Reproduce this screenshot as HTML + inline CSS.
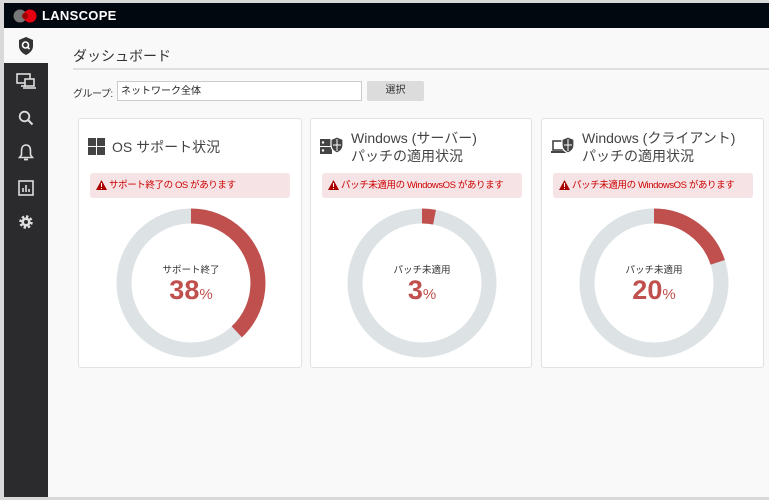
<!DOCTYPE html>
<html><head><meta charset="utf-8"><style>
*{margin:0;padding:0;box-sizing:border-box}
body{width:769px;height:500px;overflow:hidden;background:#d9d9d9;font-family:"Liberation Sans","Noto Sans CJK JP",sans-serif;position:relative}
#frame{position:absolute;left:4px;top:3px;width:765px;height:494px;background:#f9f9f9}
#top{position:absolute;left:0;top:0;width:765px;height:25px;background:#020810}
#side{position:absolute;left:0;top:25px;width:44px;height:469px;background:#2b2b2d}
#side .act{height:35px;background:#f9f9f9}
.ic{position:absolute;left:12px}
.abs{position:absolute;white-space:nowrap}
.card{position:absolute;top:115px;height:250px;background:#fff;border:1px solid #e2e2e2;border-radius:3px}
.ttl{position:absolute;font-size:14px;color:#444;line-height:18px;white-space:nowrap}
.alert{position:absolute;left:11px;top:54px;width:200px;height:25px;background:#f5e3e5;border-radius:3px;color:#c00;font-size:9.5px;letter-spacing:-0.4px;line-height:25px;padding-left:19px;white-space:nowrap;overflow:hidden}
.alert svg{position:absolute;left:6px;top:7px}
.lbl{position:absolute;width:150px;text-align:center;font-size:9.5px;color:#333}
.pct{position:absolute;width:150px;text-align:center;font-size:27px;font-weight:bold;color:#c0504d}
.pct small{font-size:15px;font-weight:normal}
</style></head><body>
<div id="frame">
<div id="top">
<svg class="abs" style="left:9px;top:6px" width="26" height="14"><circle cx="7" cy="7" r="6.5" fill="#777"/><circle cx="17" cy="7" r="6.5" fill="#e60012"/><circle cx="12" cy="7" r="3" fill="#900"/></svg>
<div class="abs" style="left:38px;top:5px;color:#fff;font-weight:bold;font-size:13px;letter-spacing:0.3px">LANSCOPE</div>
</div>
<div id="side"><div class="act"></div>
<svg class="ic" style="top:9px;left:14px" width="16" height="18" viewBox="0 0 16 18"><path d="M8 0L15 3V9C15 13 12 16 8 18C4 16 1 13 1 9V3Z" fill="#333"/><circle cx="7.5" cy="8" r="3" fill="none" stroke="#fff" stroke-width="1.6"/><path d="M9.5 10L11.5 12" stroke="#fff" stroke-width="1.6"/></svg>
<svg class="ic" style="top:45px" width="20" height="16" viewBox="0 0 20 16"><rect x="1" y="1" width="13" height="9" fill="none" stroke="#ddd" stroke-width="1.6"/><path d="M5 13H10" stroke="#ddd" stroke-width="1.6"/><rect x="9" y="6" width="9" height="7" fill="#2b2b2d" stroke="#ddd" stroke-width="1.6"/><path d="M7 15H20" stroke="#ddd" stroke-width="1.6"/></svg>
<svg class="ic" style="top:82px;left:14px" width="16" height="16"><circle cx="6.5" cy="6.5" r="4.8" fill="none" stroke="#ddd" stroke-width="1.8"/><path d="M10 10L14.5 14.5" stroke="#ddd" stroke-width="2"/></svg>
<svg class="ic" style="top:116px;left:14px" width="16" height="18"><path d="M8 1C4.5 1 3.5 4 3.5 7V11L1.5 13.5H14.5L12.5 11V7C12.5 4 11.5 1 8 1Z" fill="none" stroke="#ddd" stroke-width="1.6"/><path d="M6 15.5H10" stroke="#ddd" stroke-width="1.8"/></svg>
<svg class="ic" style="top:152px;left:14px" width="16" height="16"><rect x="1" y="1" width="14" height="14" fill="none" stroke="#ddd" stroke-width="1.6"/><path d="M5 12V8M8 12V5M11 12V9" stroke="#ddd" stroke-width="1.6"/></svg>
<svg class="ic" style="top:186px;left:14px" width="16" height="16" viewBox="0 0 16 16"><circle cx="8" cy="8" r="5" fill="none" stroke="#ddd" stroke-width="3.5" stroke-dasharray="2.2 1.7"/><circle cx="8" cy="8" r="4.6" fill="#ddd"/><circle cx="8" cy="8" r="2" fill="#2b2b2d"/></svg>
</div>
<div class="abs" style="left:69px;top:43px;font-size:14px;color:#333">ダッシュボード</div>
<div class="abs" style="left:69px;top:65px;width:696px;height:2px;background:#e0e0e0"></div>
<div class="abs" style="left:69px;top:82px;font-size:10px;color:#333;letter-spacing:-0.5px">グループ:</div>
<div class="abs" style="left:113px;top:78px;width:245px;height:20px;background:#fff;border:1px solid #ccc;font-size:10px;line-height:20px;padding-left:3px;color:#222">ネットワーク全体</div>
<div class="abs" style="left:363px;top:78px;width:57px;height:20px;background:#dcdcdc;border-radius:2px;font-size:10px;line-height:20px;text-align:center;color:#333">選択</div>

<div class="card" style="left:74px;width:224px">
<svg class="abs" style="left:9px;top:19px" width="17" height="17"><rect x="0" y="0" width="8" height="8" fill="#444"/><rect x="9" y="0" width="8" height="8" fill="#444"/><rect x="0" y="9" width="8" height="8" fill="#444"/><rect x="9" y="9" width="8" height="8" fill="#444"/></svg>
<div class="ttl" style="left:33px;top:19px">OS サポート状況</div>
<div class="alert"><svg width="11" height="10"><path d="M5.5 0L11 10H0Z" fill="#a00"/><rect x="5" y="3" width="1" height="4" fill="#fff"/><rect x="5" y="8" width="1" height="1" fill="#fff"/></svg>サポート終了の OS があります</div>
<svg class="abs" style="left:37px;top:89px" width="150" height="150"><circle cx="75" cy="75" r="67" fill="none" stroke="#dde2e5" stroke-width="15"/><circle cx="75" cy="75" r="67" fill="none" stroke="#c0504d" stroke-width="15" stroke-dasharray="159.97 500" transform="rotate(-90 75 75)"/></svg>
<div class="lbl" style="left:37px;top:143px">サポート終了</div>
<div class="pct" style="left:37px;top:156px">38<small>%</small></div>
</div>

<div class="card" style="left:306px;width:222px">
<svg class="abs" style="left:9px;top:17px" width="24" height="20"><rect x="0" y="3" width="12" height="7" fill="#444"/><rect x="0" y="11" width="12" height="7" fill="#444"/><circle cx="3" cy="6.5" r="1.2" fill="#fff"/><circle cx="3" cy="14.5" r="1.2" fill="#fff"/><path d="M17 1L23 3.5V9C23 13 20.5 15.5 17 17C13.5 15.5 11 13 11 9V3.5Z" fill="#444" stroke="#fff" stroke-width="1.2"/><path d="M17 3V15M13 9H21" stroke="#fff" stroke-width="1"/></svg>
<div class="ttl" style="left:40px;top:10px">Windows (サーバー)<br>パッチの適用状況</div>
<div class="alert"><svg width="11" height="10"><path d="M5.5 0L11 10H0Z" fill="#a00"/><rect x="5" y="3" width="1" height="4" fill="#fff"/><rect x="5" y="8" width="1" height="1" fill="#fff"/></svg>パッチ未適用の WindowsOS があります</div>
<svg class="abs" style="left:36px;top:89px" width="150" height="150"><circle cx="75" cy="75" r="67" fill="none" stroke="#dde2e5" stroke-width="15"/><circle cx="75" cy="75" r="67" fill="none" stroke="#c0504d" stroke-width="15" stroke-dasharray="12.6 500" transform="rotate(-90 75 75)"/></svg>
<div class="lbl" style="left:36px;top:143px">パッチ未適用</div>
<div class="pct" style="left:36px;top:156px">3<small>%</small></div>
</div>

<div class="card" style="left:537px;width:223px">
<svg class="abs" style="left:9px;top:17px" width="24" height="20"><rect x="2" y="5" width="13" height="9" fill="none" stroke="#444" stroke-width="1.6"/><path d="M0 16H17" stroke="#444" stroke-width="2"/><path d="M17 1L23 3.5V9C23 13 20.5 15.5 17 17C13.5 15.5 11 13 11 9V3.5Z" fill="#444" stroke="#fff" stroke-width="1.2"/><path d="M17 3V15M13 9H21" stroke="#fff" stroke-width="1"/></svg>
<div class="ttl" style="left:40px;top:10px">Windows (クライアント)<br>パッチの適用状況</div>
<div class="alert"><svg width="11" height="10"><path d="M5.5 0L11 10H0Z" fill="#a00"/><rect x="5" y="3" width="1" height="4" fill="#fff"/><rect x="5" y="8" width="1" height="1" fill="#fff"/></svg>パッチ未適用の WindowsOS があります</div>
<svg class="abs" style="left:37px;top:89px" width="150" height="150"><circle cx="75" cy="75" r="67" fill="none" stroke="#dde2e5" stroke-width="15"/><circle cx="75" cy="75" r="67" fill="none" stroke="#c0504d" stroke-width="15" stroke-dasharray="84.2 500" transform="rotate(-90 75 75)"/></svg>
<div class="lbl" style="left:37px;top:143px">パッチ未適用</div>
<div class="pct" style="left:37px;top:156px">20<small>%</small></div>
</div>
</div>
</body></html>
